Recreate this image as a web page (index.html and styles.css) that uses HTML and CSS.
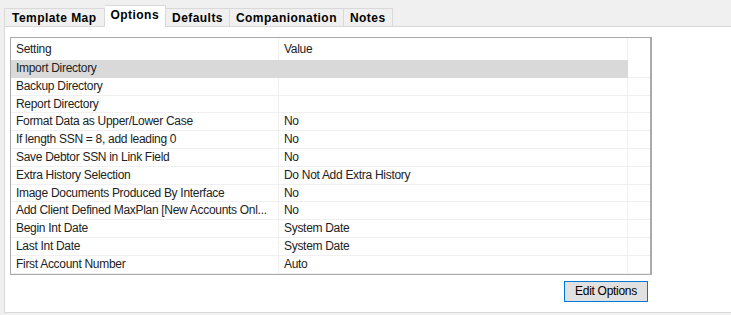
FILE: index.html
```html
<!DOCTYPE html>
<html>

<head>
    <meta name="viewport" content="width=device-width, initial-scale=1">
    <link rel="stylesheet" href="styles.css">
</head>

<body>
    <div class="tabs">
        <div class="tab">Template Map</div>
        <div class="tab active">Options</div>
        <div class="tab">Defaults</div>
        <div class="tab">Companionation</div>
        <div class="tab">Notes</div>
    </div>
    <div class="panel">
        <div class="grid">
            <div class="row head">
                <div class="cell">Setting</div>
                <div class="cell">Value</div>
                <div class="cell"></div>
            </div>
            <div class="row selected">
                <div class="cell">Import Directory</div>
                <div class="cell"></div>
                <div class="cell"></div>
            </div>
            <div class="row">
                <div class="cell">Backup Directory</div>
                <div class="cell"></div>
                <div class="cell"></div>
            </div>
            <div class="row">
                <div class="cell">Report Directory</div>
                <div class="cell"></div>
                <div class="cell"></div>
            </div>
            <div class="row">
                <div class="cell">Format Data as Upper/Lower Case</div>
                <div class="cell">No</div>
                <div class="cell"></div>
            </div>
            <div class="row">
                <div class="cell">If length SSN = 8, add leading 0</div>
                <div class="cell">No</div>
                <div class="cell"></div>
            </div>
            <div class="row">
                <div class="cell">Save Debtor SSN in Link Field</div>
                <div class="cell">No</div>
                <div class="cell"></div>
            </div>
            <div class="row">
                <div class="cell">Extra History Selection</div>
                <div class="cell">Do Not Add Extra History</div>
                <div class="cell"></div>
            </div>
            <div class="row">
                <div class="cell">Image Documents Produced By Interface</div>
                <div class="cell">No</div>
                <div class="cell"></div>
            </div>
            <div class="row">
                <div class="cell">Add Client Defined MaxPlan [New Accounts Onl...</div>
                <div class="cell">No</div>
                <div class="cell"></div>
            </div>
            <div class="row">
                <div class="cell">Begin Int Date</div>
                <div class="cell">System Date</div>
                <div class="cell"></div>
            </div>
            <div class="row">
                <div class="cell">Last Int Date</div>
                <div class="cell">System Date</div>
                <div class="cell"></div>
            </div>
            <div class="row">
                <div class="cell">First Account Number</div>
                <div class="cell">Auto</div>
                <div class="cell"></div>
            </div>
        </div>
        <div class="actions">
            <button class="btn">Edit Options</button>
        </div>
    </div>
</body>

</html>
```

FILE: styles.css
```css
body {
    margin: 0;
    height: 315px;
    background: #f0f0f0;
    font-family: "Liberation Sans", Arial, sans-serif;
    overflow: hidden;
}

.tabs {
    display: flex;
    align-items: flex-end;
    height: 26px;
    padding-left: 4px;
    position: relative;
    z-index: 1;
}

.tab {
    height: 17px;
    padding: 0 6px;
    border: 1px solid #d9d9d9;
    border-left: none;
    border-bottom: none;
    background: #f0f0f0;
    font-size: 12px;
    font-weight: bold;
    letter-spacing: 0.45px;
    color: #000;
    line-height: 18px;
}

.tab:first-child {
    border-left: 1px solid #d9d9d9;
    padding: 0 7px;
}

.tab.active {
    height: 21px;
    background: #fff;
    margin-bottom: -1px;
    line-height: 18px;
}

.panel {
    margin-left: 4px;
    height: 285px;
    background: #fff;
    border: 1px solid #d9d9d9;
    border-right: none;
}

.grid {
    margin: 10px 0 0 5px;
    width: 639px;
    border: 1px solid #a9a9a9;
    border-right-width: 2px;
    font-size: 12px;
    letter-spacing: -0.3px;
    color: #222;
}

.row {
    display: grid;
    grid-template-columns: 268px 349px 1fr;
    height: 17.8px;
}

.row.head {
    height: 22px;
}

.cell {
    border-bottom: 1px solid #f0f0f0;
    border-right: 1px solid #f0f0f0;
    padding-left: 5px;
    line-height: 17px;
    white-space: nowrap;
    overflow: hidden;
}

.row.head .cell {
    line-height: 22px;
    border-bottom: none;
}

.row .cell:last-child {
    border-right: none;
}

.row.selected .cell:nth-child(-n+2) {
    background: #d9d9d9;
    border-color: #d9d9d9;
}

.actions {
    display: flex;
    justify-content: flex-end;
    width: 643px;
    margin-top: 6px;
}

.btn {
    width: 84px;
    height: 21px;
    padding: 0;
    border: 1px solid #0078d7;
    background: #e1e1e1;
    font-family: "Liberation Sans", Arial, sans-serif;
    font-size: 12px;
    letter-spacing: -0.3px;
    color: #000;
}
```
